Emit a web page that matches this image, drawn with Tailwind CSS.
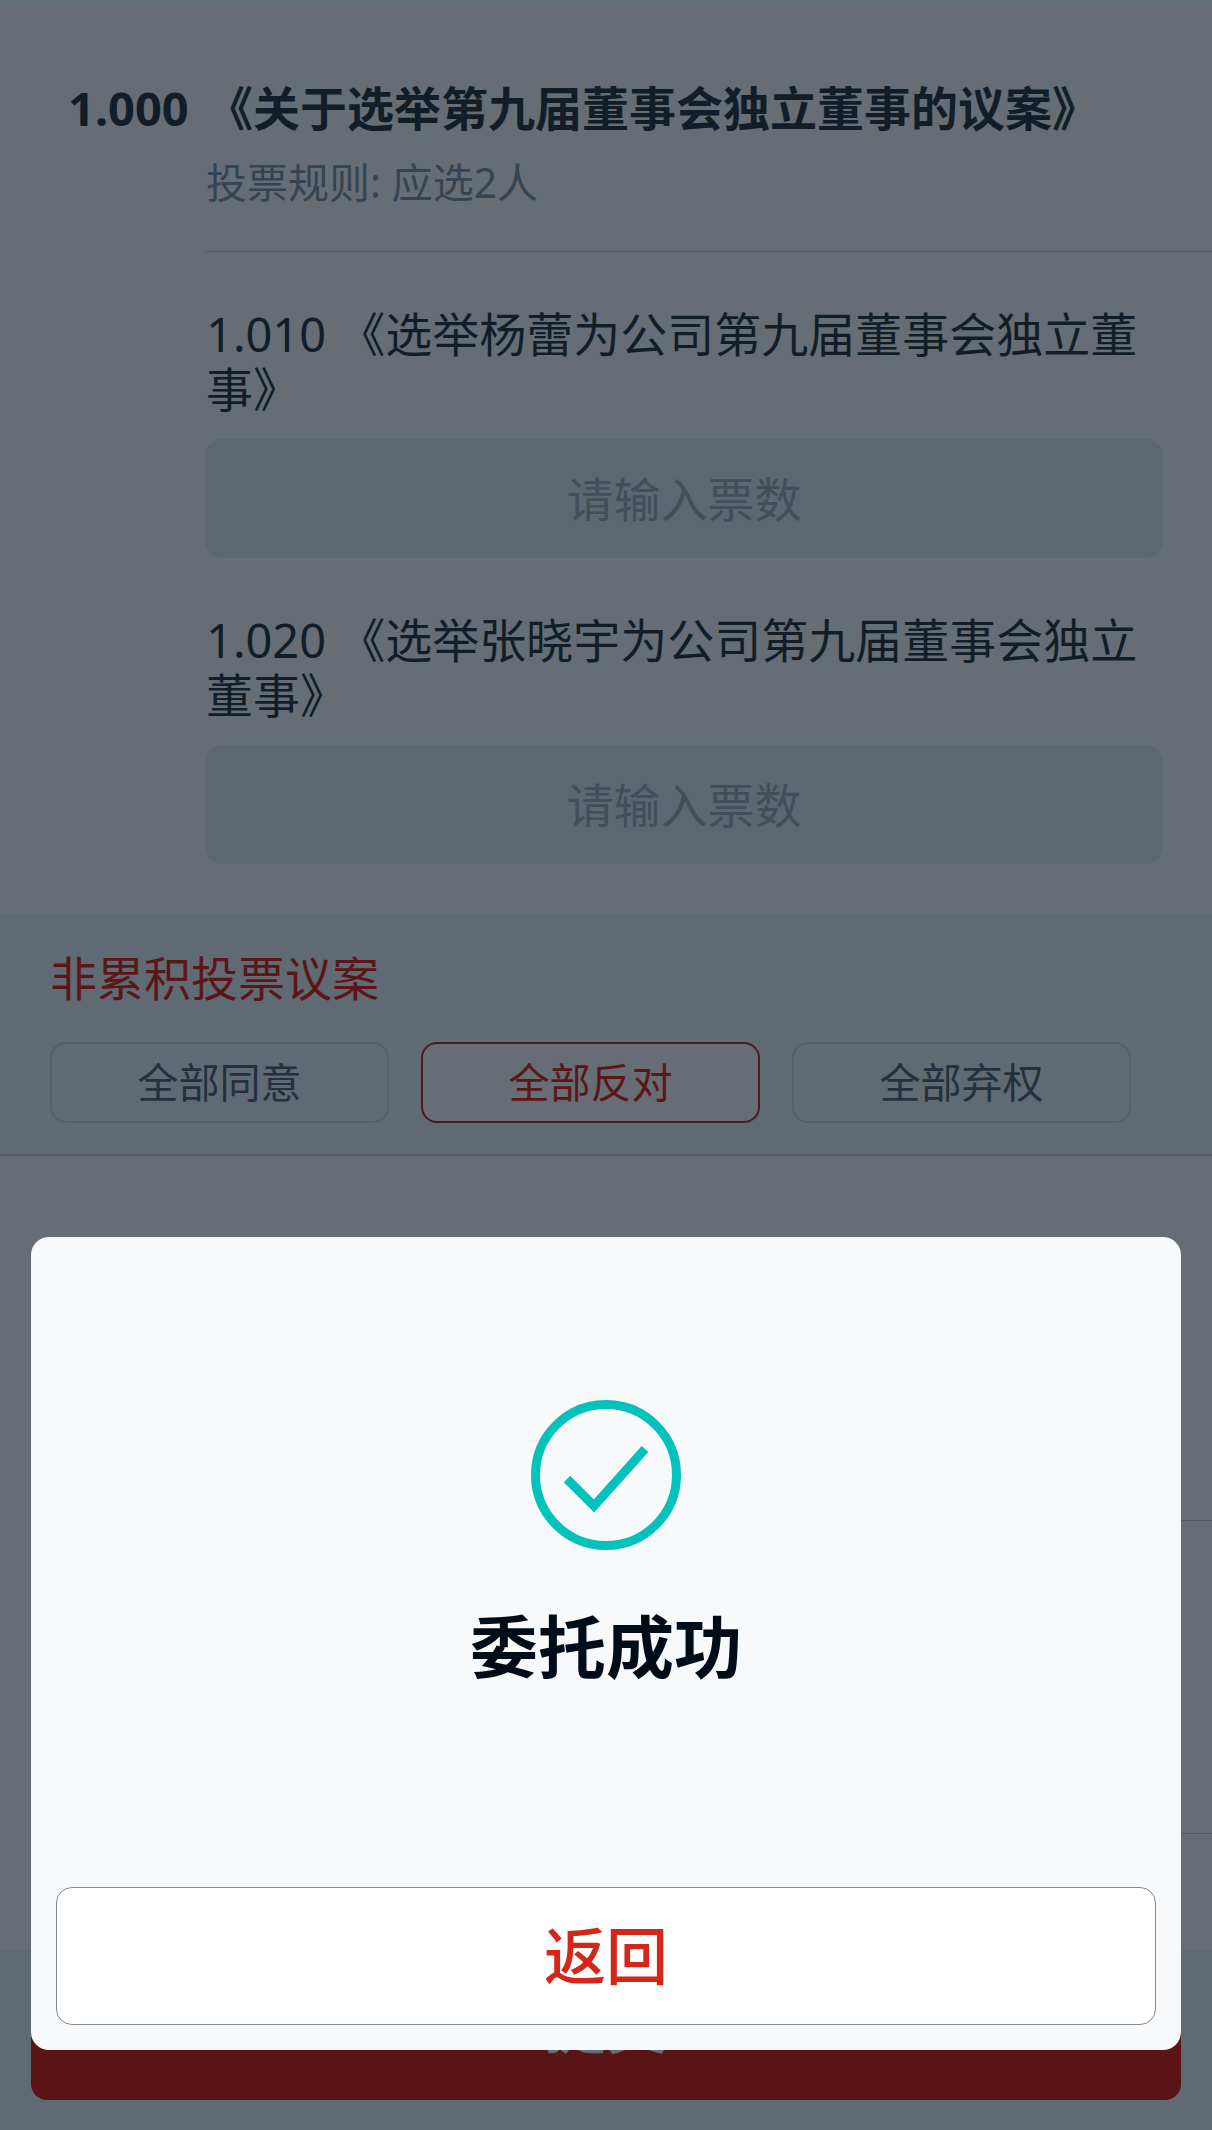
<!DOCTYPE html>
<html lang="zh-CN">
<head>
  <meta charset="UTF-8" />
  <meta name="viewport" content="width=device-width, initial-scale=1.0" />
  <title>网络投票</title>
  <script src="https://cdn.jsdelivr.net/npm/@tailwindcss/browser@4"></script>
</head>
<body class="bg-[#666d75] text-[#111e27] font-['Noto_Sans','Noto_Sans_CJK_SC',sans-serif]">
<main class="min-h-screen flex flex-col">
  <div class="h-[5px] bg-[#626e78]"></div>

  <!-- 累积投票议案 -->
  <section class="pt-[75px] pb-[50px]">
    <div class="flex">
      <span class="w-[206px] shrink-0 pl-[68px] text-[47px] leading-[56px] font-bold">1.000</span>
      <div class="flex-1 pb-[41px] border-b border-[#4f5c66]">
        <h2 class="text-[47px] leading-[56px] font-bold">《关于选举第九届董事会独立董事的议案》</h2>
        <p class="mt-[18px] text-[41px] leading-[56px] text-[#354450]">投票规则: 应选2人</p>
      </div>
    </div>
    <div class="pl-[206px] pr-[50px] pt-[55px] flex flex-col gap-[55px]">
      <div>
        <label for="vote1" class="block text-[47px] leading-[55px]">1.010 《选举杨蕾为公司第九届董事会独立董事》</label>
        <input id="vote1" type="text" placeholder="请输入票数" class="block mt-[22px] w-full h-[119px] rounded-2xl bg-[#5d6770] text-center text-[47px] placeholder:text-[#424e58]" />
      </div>
      <div>
        <label for="vote2" class="block text-[47px] leading-[55px]">1.020 《选举张晓宇为公司第九届董事会独立董事》</label>
        <input id="vote2" type="text" placeholder="请输入票数" class="block mt-[22px] w-full h-[119px] rounded-2xl bg-[#5d6770] text-center text-[47px] placeholder:text-[#424e58]" />
      </div>
    </div>
  </section>

  <!-- 非累积投票议案 -->
  <section class="bg-[#606a73] pl-[50px] pr-[81px] pt-[36px] pb-[31px] border-b-2 border-[#4f5c66]">
    <h2 class="text-[47px] leading-[56px] text-[#5c1618]">非累积投票议案</h2>
    <div class="mt-[36px] flex gap-8 text-[41px]">
      <button type="button" class="flex-1 h-[81px] rounded-2xl border-2 border-[#555f68] text-[#22313c]">全部同意</button>
      <button type="button" class="flex-1 h-[81px] rounded-2xl border-2 border-[#4b1b20] bg-[#666d75] text-[#5c1618]">全部反对</button>
      <button type="button" class="flex-1 h-[81px] rounded-2xl border-2 border-[#555f68] text-[#22313c]">全部弃权</button>
    </div>
  </section>
  <div class="ml-[206px] h-[365px] border-b border-[#4f5c66]"></div>
  <div class="ml-[206px] h-[313px] border-b border-[#4f5c66]"></div>

  <footer class="mt-auto bg-[#606a73] px-[31px] pb-[30px]">
    <button type="submit" class="w-full h-[150px] rounded-2xl bg-[#5b1415] text-[62px] font-medium text-[#666d75]">提交</button>
  </footer>
</main>

<!-- 委托结果弹窗 -->
<div class="fixed inset-0 flex items-end px-[31px] pb-20">
  <div role="dialog" aria-labelledby="resultTitle" class="w-full rounded-[18px] bg-[#f8f9fb] px-[25px] pt-[163px] pb-[25px] flex flex-col items-center">
    <svg class="w-[150px] h-[150px]" viewBox="0 0 150 150" fill="none" stroke="#03c1bb" stroke-width="9">
      <circle cx="75" cy="75" r="70.5" />
      <path d="M36 79 L63 106 L114 49" />
    </svg>
    <h1 id="resultTitle" class="mt-[57px] text-[68px] leading-[80px] font-bold text-[#000d18]">委托成功</h1>
    <button type="button" class="mt-[200px] w-full h-[138px] rounded-2xl border border-[#808a90] bg-white text-[62px] font-medium text-[#d3271a]">返回</button>
  </div>
</div>
</body>
</html>
